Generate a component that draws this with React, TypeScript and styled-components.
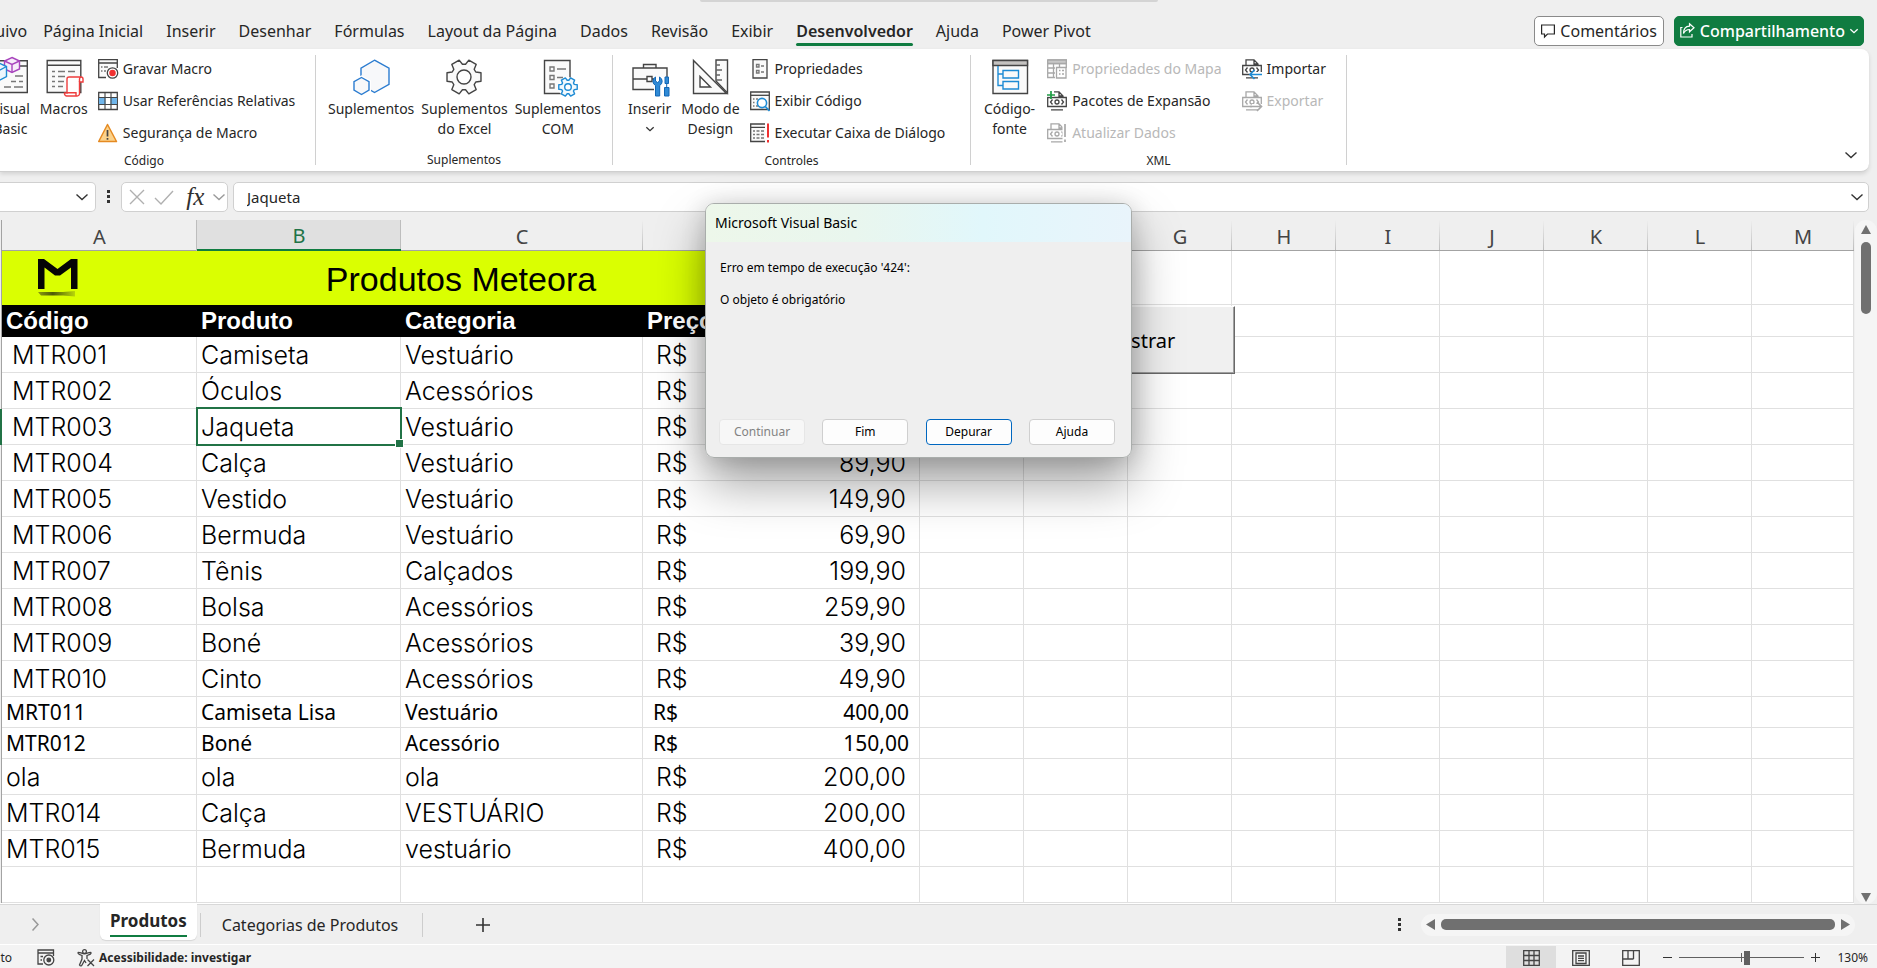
import React from "react";
import styled, { createGlobalStyle, css } from "styled-components";

const ui = '"Noto Sans", "Open Sans", sans-serif';
const GREEN = "#107c41";
const LINE = "#e0e0e0";

const Global = createGlobalStyle`
  * { box-sizing: border-box; }
  body { margin: 0; background: #efefef; font-family: ${ui}; color: #262626; overflow: hidden; }
  button, input { font-family: inherit; color: inherit; }
  svg { display: block; flex: none; overflow: visible; }
`;

const Window = styled.div`
  position: relative;
  display: flex;
  flex-direction: column;
  height: 100vh;
  overflow: hidden;
`;

/* ---------- menu bar ---------- */
const SearchEdge = styled.div`
  position: absolute;
  top: 0;
  left: 700px;
  width: 458px;
  height: 2px;
  background: #d4d4d4;
  border-radius: 0 0 4px 4px;
`;
const MenuBar = styled.header`
  display: flex;
  align-items: center;
  justify-content: space-between;
  flex: none;
  height: 49px;
  padding: 12px 13px 0 0;
`;
const Menu = styled.nav`
  display: flex;
  gap: 23px;
  margin-left: -31px;
`;
const MenuItem = styled.a<{ $active?: boolean }>`
  position: relative;
  font-size: 16px;
  line-height: 24px;
  color: #262626;
  text-decoration: none;
  white-space: nowrap;
  &:first-child { margin-right: -7px; }
  ${(p) =>
    p.$active &&
    css`
      font-weight: 600;
      &::after {
        content: "";
        position: absolute;
        left: 0;
        right: 0;
        bottom: -3px;
        height: 3px;
        border-radius: 2px;
        background: ${GREEN};
      }
    `}
`;
const Actions = styled.div`
  display: flex;
  gap: 10px;
`;
const ActionButton = styled.button<{ $primary?: boolean }>`
  display: flex;
  align-items: center;
  gap: 5px;
  height: 30px;
  padding: 0 ${(p) => (p.$primary ? 5 : 6)}px;
  border: 1px solid ${(p) => (p.$primary ? GREEN : "#8a8a8a")};
  border-radius: 5px;
  background: ${(p) => (p.$primary ? GREEN : "#fff")};
  color: ${(p) => (p.$primary ? "#fff" : "#262626")};
  font-size: 16px;
  font-weight: ${(p) => (p.$primary ? 500 : 400)};
  line-height: 24px;
`;

/* ---------- ribbon ---------- */
const Ribbon = styled.section`
  display: flex;
  flex: none;
  height: 123px;
  margin-right: 8px;
  padding-top: 4px;
  background: #fff;
  border-radius: 0 8px 8px 0;
  border-bottom: 1px solid #cfcfcf;
  box-shadow: 0 2px 4px rgba(0, 0, 0, 0.12);
`;
const Group = styled.div<{ $width: number; $shift?: number }>`
  display: flex;
  flex-direction: column;
  flex: none;
  width: ${(p) => p.$width}px;
  margin-left: ${(p) => p.$shift ?? 0}px;
`;
const GroupRow = styled.div<{ $gap: number; $pad: number }>`
  display: flex;
  height: 96px;
  gap: ${(p) => p.$gap}px;
  padding-left: ${(p) => p.$pad}px;
`;
const GroupLabel = styled.div`
  font-size: 12px;
  line-height: 23px;
  text-align: center;
`;
const Divider = styled.div`
  flex: none;
  width: 1px;
  height: 110px;
  margin-top: 2px;
  background: #d0d0d0;
`;
const Big = styled.button`
  display: flex;
  flex-direction: column;
  align-items: center;
  gap: 4px;
  padding: 6px 3px 0;
  border: 0;
  background: none;
  font-size: 14px;
  line-height: 20px;
  text-align: center;
  white-space: pre-line;
`;
const SmallList = styled.div`
  display: grid;
  grid-template-rows: repeat(3, 32px);
  grid-auto-flow: column;
  column-gap: 20px;
  justify-items: start;
  margin-left: 3px;
`;
const Small = styled.button`
  display: flex;
  align-items: center;
  gap: 5px;
  padding: 0;
  border: 0;
  background: none;
  font-size: 14px;
  line-height: 20px;
  white-space: nowrap;
  &:disabled { color: #b8b8b8; }
`;
const Collapse = styled.button`
  align-self: flex-end;
  margin: 0 12px 13px auto;
  padding: 0;
  border: 0;
  background: none;
`;

/* ---------- formula bar ---------- */
const FormulaBar = styled.div`
  display: flex;
  align-items: center;
  flex: none;
  height: 30px;
  margin: 10px 8px 8px 0;
`;
const Box = styled.div<{ $kind: "name" | "fx" | "text" }>`
  display: flex;
  align-items: center;
  height: 30px;
  border: 1px solid #d0d0d0;
  background: #fff;
  ${(p) =>
    p.$kind === "name"
      ? "width: 96px; border-left: 0; border-radius: 0 5px 5px 0; padding-right: 7px;"
      : p.$kind === "fx"
      ? "width: 107px; border-radius: 5px; justify-content: space-between; padding: 0 2px 0 7px; margin-right: 5px;"
      : "flex: 1; border-radius: 5px; padding: 0 5px 0 13px;"}
`;
const PlainInput = styled.input`
  flex: 1;
  min-width: 0;
  padding: 0;
  border: 0;
  outline: 0;
  background: none;
  font-size: 15px;
  line-height: 22px;
`;
const Dots = styled.div`
  width: 25px;
  display: flex;
  justify-content: center;
`;
const Fx = styled.span`
  padding-left: 4px;
  font: italic 400 25px/24px "Liberation Serif", serif;
  color: #303030;
`;

/* ---------- sheet ---------- */
const Sheet = styled.main`
  position: relative;
  display: flex;
  align-items: stretch;
  flex: 1;
  min-height: 0;
  overflow: hidden;
`;
const GridArea = styled.div`
  position: relative;
  flex: 1;
  min-width: 0;
  background: #fff;
`;
const Grid = styled.table`
  width: 100%;
  table-layout: fixed;
  border-collapse: separate;
  border-spacing: 0;
`;
const ColHead = styled.th<{ $sel?: boolean }>`
  height: 31px;
  padding: 3px 0 0;
  background: linear-gradient(#efefef, #bdbdbd) right / 1px 100% no-repeat, #efefef;
  border-bottom: 1px solid #a3a3a3;
  color: #444;
  font-size: 20px;
  font-weight: 400;
  line-height: 26px;
  ${(p) =>
    p.$sel &&
    css`
      padding-top: 2px;
      background: #e0e0e0;
      box-shadow: -1px 0 0 #bdbdbd, inset -1px 0 0 #bdbdbd;
      border-bottom: 2px solid ${GREEN};
      color: #217346;
    `}
`;
const RowHead = styled.th<{ $sel?: boolean }>`
  padding: 0;
  background: ${(p) => (p.$sel ? "#217346" : "#efefef")};
  border-right: 1px solid ${(p) => (p.$sel ? "#217346" : "#a3a3a3")};
`;
const Row = styled.tr<{ $h: number }>`
  height: ${(p) => p.$h}px;
`;
const Cell = styled.td<{ $compact?: boolean; $indent?: boolean }>`
  position: relative;
  padding: 0 4px 0 ${(p) => (p.$indent ? 10 : 4)}px;
  border-right: 1px solid ${LINE};
  border-bottom: 1px solid ${LINE};
  color: #000;
  white-space: nowrap;
  font: ${(p) =>
    p.$compact ? `400 21px/28px ${ui}` : '300 25px/30px Inter, "Open Sans", sans-serif'};
`;
const Money = styled.div<{ $compact?: boolean }>`
  display: flex;
  justify-content: space-between;
  padding: ${(p) => (p.$compact ? "0 6px 0 6px" : "0 9px 0 9px")};
`;
const TitleCell = styled.td`
  position: relative;
  padding: 2px 0 0;
  background: #daff01;
  color: #000;
  font: 400 34px/40px "Liberation Sans", Arial, sans-serif;
  text-align: center;
`;
const Logo = styled.svg`
  position: absolute;
  left: 33px;
  top: 7px;
`;
const FieldCell = styled.th`
  padding: 0 4px;
  background: #000;
  color: #fff;
  font: 700 24px/28px "Liberation Sans", Arial, sans-serif;
  text-align: left;
`;
const Selection = styled.div`
  position: absolute;
  inset: -2px -2px -2px -1px;
  border: 2px solid #217346;
  z-index: 1;
  &::after {
    content: "";
    position: absolute;
    right: -4px;
    bottom: -4px;
    width: 7px;
    height: 7px;
    background: #217346;
    border: 1px solid #fff;
  }
`;
const SheetButton = styled.button`
  position: absolute;
  left: 1024px;
  top: 86px;
  width: 211px;
  height: 68px;
  border: 1px solid;
  border-color: #fff #696969 #696969 #fff;
  box-shadow: inset -1px -1px 0 #a0a0a0;
  background: #f0f0f0;
  color: #000;
  font-size: 20px;
  z-index: 2;
`;
const VScroll = styled.div`
  display: flex;
  flex-direction: column;
  align-items: center;
  flex: none;
  width: 22px;
  margin-left: 1px;
  padding: 5px 0 2px;
  border-radius: 11px;
  background: #f5f5f5;
`;
const VThumb = styled.div`
  width: 10px;
  height: 72px;
  margin: 7px 0 auto;
  border-radius: 5px;
  background: #707070;
`;

/* ---------- sheet tabs ---------- */
const TabStrip = styled.div`
  display: flex;
  align-items: center;
  flex: none;
  height: 40px;
  padding-right: 22px;
  border-top: 1px solid #d8d8d8;
`;
const Nav = styled.button`
  width: 100px;
  padding: 0 0 0 32px;
  border: 0;
  background: none;
`;
const SheetTab = styled.button<{ $active?: boolean }>`
  position: relative;
  align-self: flex-start;
  height: 36px;
  margin-top: -1px;
  border: 0;
  white-space: nowrap;
  line-height: 24px;
  ${(p) =>
    p.$active
      ? css`
          padding: 0 10px 2px;
          background: #fff;
          border-radius: 0 0 6px 6px;
          box-shadow: 0 1px 1px #d6d6d6;
          font-size: 17px;
          font-weight: 700;
          &::after {
            content: "";
            position: absolute;
            left: 10px;
            right: 10px;
            bottom: 3px;
            height: 2px;
            background: ${GREEN};
          }
        `
      : css`
          padding: 5px 21px 0;
          background: none;
          font-size: 16px;
        `}
`;
const TabRule = styled.div`
  width: 1px;
  height: 24px;
  margin-left: 3px;
  background: #cdcdcd;
`;
const AddTab = styled.button`
  margin-left: 53px;
  padding: 0;
  border: 0;
  background: none;
`;
const Spacer = styled.div`
  flex: 1;
`;
const HScroll = styled.div`
  display: flex;
  align-items: center;
  gap: 6px;
  width: 434px;
  height: 22px;
  margin-left: 20px;
  padding: 0 5px;
  border-radius: 11px;
  background: #f5f5f5;
`;
const HThumb = styled.div`
  flex: 1;
  height: 11px;
  border-radius: 5px;
  background: #707070;
`;

/* ---------- status bar ---------- */
const StatusBar = styled.footer`
  display: flex;
  align-items: center;
  flex: none;
  height: 24px;
  padding: 2px 9px 0 0;
  border-top: 1px solid #fff;
  background: #f3f3f3;
  font-size: 12px;
  line-height: 18px;
  white-space: nowrap;
`;
const Mode = styled.span`
  display: flex;
  justify-content: flex-end;
  width: 12px;
  margin-right: 25px;
`;
const Check = styled.button`
  display: flex;
  align-items: center;
  gap: 4px;
  margin-left: 22px;
  padding: 0;
  border: 0;
  background: none;
  font-size: 12px;
  font-weight: 700;
`;
const ViewButton = styled.button<{ $on?: boolean }>`
  display: flex;
  align-items: center;
  justify-content: center;
  width: 50px;
  height: 24px;
  padding: 0;
  border: 0;
  background: ${(p) => (p.$on ? "#dedede" : "none")};
`;
const ZoomStep = styled.button`
  width: 9px;
  margin: 0 7px;
  padding: 0;
  border: 0;
  background: none;
`;
const ZoomRange = styled.input`
  appearance: none;
  width: 125px;
  height: 16px;
  margin: 0;
  background: linear-gradient(#606060, #606060) center / 100% 1px no-repeat,
    linear-gradient(#606060, #606060) center / 1px 9px no-repeat;
  &::-webkit-slider-thumb {
    appearance: none;
    width: 6px;
    height: 14px;
    background: #606060;
  }
`;
const ZoomLabel = styled.span`
  width: 41px;
  text-align: right;
`;

/* ---------- dialog ---------- */
const DialogShadow = styled.div`
  position: absolute;
  left: 705px;
  top: 203px;
  border-radius: 9px;
  box-shadow: 0 26px 50px rgba(0, 0, 0, 0.36), 0 2px 24px rgba(0, 0, 0, 0.16);
  z-index: 4;
`;
const Dialog = styled.div`
  display: flex;
  flex-direction: column;
  width: 427px;
  height: 255px;
  border: 1px solid #a9adab;
  border-radius: 9px;
  background: #efefef;
  color: #000;
  overflow: hidden;
`;
const DialogTitle = styled.h2`
  margin: 0;
  padding: 0 9px;
  background: linear-gradient(90deg, #edf7ea 0%, #e9f6ee 35%, #e1f7fb 65%, #e9f4fb 100%);
  font-size: 14px;
  font-weight: 400;
  line-height: 38px;
`;
const DialogText = styled.p`
  margin: 0;
  padding: 18px 14px 0;
  font-size: 12px;
  line-height: 16px;
  white-space: pre-line;
`;
const DialogButtons = styled.div`
  display: flex;
  justify-content: space-between;
  margin: auto 16px 12px 13px;
`;
const DialogButton = styled.button<{ $default?: boolean }>`
  width: 86px;
  height: 26px;
  padding: 0;
  border: 1px solid ${(p) => (p.$default ? "#0067c0" : "#cfcfcf")};
  border-radius: 4px;
  background: #fdfdfd;
  font-size: 12px;
  line-height: 18px;
  &:disabled { color: #838383; background: #f7f7f7; border-color: #e6e6e6; }
`;

/* ---------- icons ---------- */
const D = "#444";
const BLUE = "#1e8bd4";

const Chevron = ({ size = 12, color = "#333", dir = "down" }: { size?: number; color?: string; dir?: string }) => (
  <svg width={dir === "down" ? size : size / 2} height={dir === "down" ? size / 2 : size}
    viewBox={dir === "down" ? "0 0 12 6" : "0 0 6 12"} fill="none" stroke={color} strokeWidth={size < 10 ? 2 : 1.4}>
    <path d={dir === "down" ? "M0.5 0.5 6 5.5 11.5 0.5" : "M0.5 0.5 5.5 6 0.5 11.5"} />
  </svg>
);
const MenuArrow = styled.span`
  padding-top: 4px;
`;
const Kebab = () => (
  <svg width="3" height="14" fill="#333"><path d="M0 0h3v3H0zM0 5h3v3H0zM0 10h3v3H0z" /></svg>
);

const gear = (cx: number, cy: number, ro: number, ri: number) => {
  const pts: string[] = [];
  for (let k = 0; k < 6; k++)
    for (const [a, r] of [[-23, ri], [-14, ro], [14, ro], [23, ri]]) {
      const t = ((k * 60 + a) * Math.PI) / 180;
      pts.push(`${(cx + r * Math.cos(t)).toFixed(2)},${(cy + r * Math.sin(t)).toFixed(2)}`);
    }
  return pts.join(" ");
};

const Svg36 = ({ children }: { children: React.ReactNode }) => (
  <svg width="36" height="36" viewBox="0 0 36 36" fill="none" stroke={D} strokeWidth="1.4">{children}</svg>
);
const Svg20 = ({ children, dim }: { children: React.ReactNode; dim?: boolean }) => (
  <svg width="20" height="20" viewBox="0 0 20 20" fill="none" stroke={dim ? "#a8a8a8" : D} strokeWidth="1.3">{children}</svg>
);

const VisualBasicIcon = () => (
  <Svg36>
    <path d="M1 1.7H35.3V33.5H1Z" fill="#fafafa" /><path d="M1 7H35" />
    <path d="M23 17h8M19 22.5h5M27 22.5h4M12 28h7M22 28h9" stroke="#777" />
    <path d="M20 -1.5 27.5 2V10L20 13.5 12.5 10V2Z" fill="#f7ecfa" stroke="#a845bd" />
    <path d="M12.5 2 20 5.5 27.5 2M20 5.5V13.5" stroke="#a845bd" />
    <path d="M6 3.5 14.5 7.5V17.5L6 22 -3 17.5V7.5Z" fill="#eef6fc" stroke={BLUE} />
    <path d="M-3 7.5 6 12 14.5 7.5M6 12V22" stroke={BLUE} />
  </Svg36>
);
const MacrosIcon = () => (
  <Svg36>
    <path d="M1.2 1.5H34.8V33.5H1.2Z" fill="#fafafa" /><path d="M1.2 6.3H34.8" />
    <path d="M6 12.5h3M12 12.5h7M22 12.5h7M6 17.5h3M12 17.5h7M6 22.5h3M12 22.5h6M6 27.5h3M12 27.5h5" stroke="#777" />
    <path d="M22.5 18H35a2 2 0 0 1 2 2V23H33.5V34a2.5 2.5 0 0 1-2.5 3H20.5a2.5 2.5 0 0 1-2-3H21V20a2 2 0 0 1 2-2Z" fill="#fff" stroke="#ee3d3d" />
    <path d="M33.5 23V20a2 2 0 0 1 1.5-2M21 33.8H30V37" stroke="#ee3d3d" />
  </Svg36>
);
const AddinsIcon = () => (
  <Svg36>
    <path d="M21.5 1.2 36 9.2V25.3L21.5 33.5 8 25.5V9.2Z" fill="#f7f8fa" stroke="#2b7cd0" />
    <path d="M8.5 18.5 16 22.7V31.2L8.5 35.5 1 31.2V22.7Z" fill="#f7f8fa" stroke="#fff" strokeWidth="4" />
    <path d="M8.5 18.5 16 22.7V31.2L8.5 35.5 1 31.2V22.7Z" fill="#f7f8fa" stroke="#2b7cd0" />
  </Svg36>
);
const GearIcon = () => (
  <Svg36>
    <polygon points={gear(18, 18, 17.5, 12.8)} fill="#fafafa" strokeLinejoin="round" />
    <circle cx="18" cy="18" r="7" fill="#fff" />
  </Svg36>
);
const ComIcon = () => (
  <Svg36>
    <path d="M4.5 1.5H30V34.5H4.5Z" fill="#fafafa" />
    <path d="M10 8h4v4h-4zM10 16.5h4v4h-4zM10 25h4v4h-4zM17 10h9M17 18.5h6" stroke="#777" />
    <circle cx="28" cy="28" r="10" fill="#fff" stroke="none" />
    <polygon points={gear(28, 28, 9.5, 6.8)} fill="#f2f9fd" stroke={BLUE} strokeLinejoin="round" />
    <circle cx="28" cy="28" r="3.3" fill="#fff" stroke={BLUE} />
  </Svg36>
);
const ToolboxIcon = () => (
  <Svg36>
    <path d="M11.5 9V5.5H24V9M1 9H35V30.5H1ZM1 20H15M20 20H35" fill="#fafafa" />
    <path d="M15 17.5h5v5h-5z" fill="#fff" />
    <path d="M22 18H38V38H22Z" fill="#fff" stroke="none" />
    <path d="M23.500 18V22L25.500 23.500 27.500 22V18A4.800 4.800 0 0 1 27.700 26.500V37H23.500V26.500A4.800 4.800 0 0 1 23.500 18Z" fill="#2f8ad6" stroke="#1267b5" strokeWidth="1" />
    <path d="M33 18H36.500V24.500H33ZM32.500 28.500H37V37H32.500ZM34.700 24.500V28.500" fill="#2f8ad6" stroke="#1267b5" strokeWidth="1" />
  </Svg36>
);
const DesignIcon = () => (
  <Svg36>
    <path d="M24 1H35.5V34L24 22Z" fill="#fafafa" />
    <path d="M24 6h4M24 11h6M24 16h4M24 21h6" stroke="#666" />
    <path d="M1.5 1.5V34.5H34.5Z" fill="#fafafa" />
    <path d="M8 17.5V28H18.5Z" fill="#fff" />
  </Svg36>
);
const SourceIcon = () => (
  <Svg36>
    <path d="M1 1.5H35.5V34.5H1Z" fill="#fafafa" />
    <path d="M1 1.5H35.5V6.5H1Z" fill="#c4c2c0" />
    <path d="M6 7V26.5H11M6 15H11M11 11.5H26.5V19H11ZM11 22.5H26.5V30H11Z" stroke={BLUE} />
  </Svg36>
);
const RecordIcon = () => (
  <Svg20>
    <path d="M19.3 9V.7H.7V18.5H8M.7 4H19.3" fill="#fafafa" />
    <path d="M3 8h1.5M6 8h4M3 12h1.5M6 12h2" stroke="#777" />
    <circle cx="14.5" cy="14" r="5.2" fill="#fff" /><circle cx="14.5" cy="14" r="2.6" fill="#f03030" stroke="#f03030" />
  </Svg20>
);
const RelativeIcon = () => (
  <Svg20>
    <path d="M.7 1.5H19.3V18.5H.7Z" fill="#fff" />
    <path d="M1 6.5H19V13.5H1Z" fill="#6fb5ea" stroke="none" />
    <path d="M7.5 7H12.5V13H7.5Z" fill="#fff" stroke="none" />
    <path d="M.7 6.5H19.3M.7 13.5H19.3M7 1.5V18.5M13 1.5V18.5" strokeWidth="1.1" />
  </Svg20>
);
const WarningIcon = () => (
  <Svg20>
    <path d="M9.5 1.5 18.5 18.5H.7Z" fill="#fbd28b" stroke="#e58a22" strokeWidth="1.5" strokeLinejoin="round" />
    <path d="M9.5 7V13.5M9.5 15V16.8" strokeWidth="1.7" />
  </Svg20>
);
const PropsIcon = () => (
  <Svg20>
    <path d="M3 .7H17V19H3Z" fill="#fafafa" />
    <path d="M6.5 5.5h2.5v2.5H6.5zM6.5 11.5h2.5v2.5H6.5zM11 7h3M11 13h3" stroke="#777" />
  </Svg20>
);
const ViewCodeIcon = () => (
  <Svg20>
    <path d="M.7 1H19.3V18.5H.7Z" fill="#fafafa" /><path d="M.7 4.3H19.3" />
    <path d="M3 8h1.5M6 8h2M3 11.5h1.5M3 15h1.5M6 15h2" stroke="#777" />
    <circle cx="12" cy="12" r="4.6" fill="#fff" stroke={BLUE} strokeWidth="1.6" /><path d="M15.3 15.5 19.5 20" stroke={BLUE} strokeWidth="1.8" />
  </Svg20>
);
const RunDialogIcon = () => (
  <Svg20>
    <path d="M15 1H.7V18.5H15M.7 4.3H15" fill="#fafafa" />
    <path d="M3 8h2M6.5 8h3M11 8h3M3 11.5h2M6.5 11.5h3M11 11.5h3M3 15h2M6.5 15h3M11 15h3" stroke="#777" />
    <path d="M18 .5V14.5M18 17V19.5" stroke="#f03030" strokeWidth="2" />
  </Svg20>
);
const MapPropsIcon = () => (
  <Svg20 dim>
    <path d="M.7 1H19.3V9M.7 1V18.5H8M.7 4.5H19.3M.7 9H8M.7 14H8M6.5 4.5V18.5M12.5 4.5V8" />
    <path d="M.7 1H19.3V4.5H.7Z" fill="#c8c8c8" />
    <path d="M9.5 8.5H19V19H9.5ZM12 11.5h1.5M15 11.5h2M12 15h1.5M15 15h2" />
  </Svg20>
);
const XmlBase = () => (
  <>
    <path d="M4 6V.8H12L16 5V6M12 1V5H16M.7 6.5H19.3V15.5H.7ZM4 18.8H16" />
    <path d="M5.5 8.5 3.5 11 5.5 13.5M14.5 8.5 16.5 11 14.5 13.5" />
    <circle cx="10" cy="11" r="2" />
  </>
);
const PacksIcon = () => (
  <Svg20><XmlBase /><path d="M-1 -1H7V5.5H-1Z" fill="#fff" stroke="none" /><path d="M4 0V8M0 4H8" stroke="#1f9d45" strokeWidth="1.7" /></Svg20>
);
const RefreshIcon = () => (
  <Svg20 dim><XmlBase /><path d="M15.5 3H21V20H15.5Z" fill="#fff" stroke="none" /><path d="M18 1V14M18 16.5V19" strokeWidth="1.7" /></Svg20>
);
const ImportIcon = () => (
  <Svg20><XmlBase /><path d="M10 13H21V18H10Z" fill="#fff" stroke="none" /><path d="M20 15.5H8M12.5 11 8 15.5 12.5 20" stroke={BLUE} strokeWidth="1.6" /></Svg20>
);
const ExportIcon = () => (
  <Svg20 dim><XmlBase /><path d="M10 13H21V18H10Z" fill="#fff" stroke="none" /><path d="M8 15.5H19M15 11 19.5 15.5 15 20" strokeWidth="1.6" /></Svg20>
);
const CommentIcon = () => (
  <svg width="14" height="14" viewBox="0 0 14 14" fill="none" stroke="#262626" strokeWidth="1.2">
    <path d="M.6 1H13.4V10H6.5L3.5 13V10H.6Z" />
  </svg>
);
const ShareIcon = () => (
  <svg width="15" height="15" viewBox="0 0 15 15" fill="none" stroke="#fff" strokeWidth="1.2">
    <path d="M2.5 4.5H.8V14H12V11M9.5 .8 14 4.8 9.5 8.8V6.5C6.5 6.5 5 7.5 3.5 10.5 3.5 6 5.5 3.3 9.5 3.1Z" />
  </svg>
);

/* ---------- data ---------- */
type Item = { code: string; name: string; cat: string; price: string; compact?: boolean; indent?: boolean };
const item = (code: string, name: string, cat: string, price: string, compact = false): Item => ({
  code, name, cat, price, compact, indent: /^MTR0(0|10)/.test(code),
});
const items: Item[] = [
  item("MTR001", "Camiseta", "Vestuário", "79,90"),
  item("MTR002", "Óculos", "Acessórios", "99,90"),
  item("MTR003", "Jaqueta", "Vestuário", "199,90"),
  item("MTR004", "Calça", "Vestuário", "89,90"),
  item("MTR005", "Vestido", "Vestuário", "149,90"),
  item("MTR006", "Bermuda", "Vestuário", "69,90"),
  item("MTR007", "Tênis", "Calçados", "199,90"),
  item("MTR008", "Bolsa", "Acessórios", "259,90"),
  item("MTR009", "Boné", "Acessórios", "39,90"),
  item("MTR010", "Cinto", "Acessórios", "49,90"),
  item("MRT011", "Camiseta Lisa", "Vestuário", "400,00", true),
  item("MTR012", "Boné", "Acessório", "150,00", true),
  item("ola", "ola", "ola", "200,00"),
  item("MTR014", "Calça", "VESTUÁRIO", "200,00"),
  item("MTR015", "Bermuda", "vestuário", "400,00"),
];
const columns = ["A", "B", "C", "D", "E", "F", "G", "H", "I", "J", "K", "L", "M"];
const widths = [195, 204, 242, 277, 104, 104, 104, 104, 104, 104, 104, 104];
const menus = ["Arquivo", "Página Inicial", "Inserir", "Desenhar", "Fórmulas", "Layout da Página", "Dados", "Revisão", "Exibir", "Desenvolvedor", "Ajuda", "Power Pivot"];
const SELECTED_CODE = "MTR003";

const Blanks = ({ n }: { n: number }) => <>{Array.from({ length: n }, (_, i) => <Cell key={i} />)}</>;

export default function App() {
  return (
    <Window>
      <Global />
      <SearchEdge />
      <MenuBar>
        <Menu>
          {menus.map((m) => (
            <MenuItem key={m} href="#" $active={m === "Desenvolvedor"}>{m}</MenuItem>
          ))}
        </Menu>
        <Actions>
          <ActionButton><CommentIcon />Comentários</ActionButton>
          <ActionButton $primary><ShareIcon />Compartilhamento<Chevron size={8} color="#fff" /></ActionButton>
        </Actions>
      </MenuBar>

      <Ribbon>
        <Group $width={342} $shift={-27}>
          <GroupRow $gap={4} $pad={15}>
            <Big><VisualBasicIcon />{"Visual\nBasic"}</Big>
            <Big><MacrosIcon />Macros</Big>
            <SmallList>
              <Small><RecordIcon />Gravar Macro</Small>
              <Small><RelativeIcon />Usar Referências Relativas</Small>
              <Small><WarningIcon />Segurança de Macro</Small>
            </SmallList>
          </GroupRow>
          <GroupLabel>Código</GroupLabel>
        </Group>
        <Divider />
        <Group $width={296}>
          <GroupRow $gap={1} $pad={9}>
            <Big><AddinsIcon />Suplementos</Big>
            <Big><GearIcon />{"Suplementos\ndo Excel"}</Big>
            <Big><ComIcon />{"Suplementos\nCOM"}</Big>
          </GroupRow>
          <GroupLabel>Suplementos</GroupLabel>
        </Group>
        <Divider />
        <Group $width={357}>
          <GroupRow $gap={4} $pad={12}>
            <Big><ToolboxIcon />Inserir<MenuArrow><Chevron size={8} /></MenuArrow></Big>
            <Big><DesignIcon />{"Modo de\nDesign"}</Big>
            <SmallList>
              <Small><PropsIcon />Propriedades</Small>
              <Small><ViewCodeIcon />Exibir Código</Small>
              <Small><RunDialogIcon />Executar Caixa de Diálogo</Small>
            </SmallList>
          </GroupRow>
          <GroupLabel>Controles</GroupLabel>
        </Group>
        <Divider />
        <Group $width={375}>
          <GroupRow $gap={6} $pad={10}>
            <Big><SourceIcon />{"Código-\nfonte"}</Big>
            <SmallList>
              <Small disabled><MapPropsIcon />Propriedades do Mapa</Small>
              <Small><PacksIcon />Pacotes de Expansão</Small>
              <Small disabled><RefreshIcon />Atualizar Dados</Small>
              <Small><ImportIcon />Importar</Small>
              <Small disabled><ExportIcon />Exportar</Small>
            </SmallList>
          </GroupRow>
          <GroupLabel>XML</GroupLabel>
        </Group>
        <Divider />
        <Collapse aria-label="Recolher faixa"><Chevron /></Collapse>
      </Ribbon>

      <FormulaBar>
        <Box $kind="name"><PlainInput aria-label="Caixa de nome" /><Chevron /></Box>
        <Dots><Kebab /></Dots>
        <Box $kind="fx">
          <svg width="16" height="16" fill="none" stroke="#b0b0b0" strokeWidth="1.4"><path d="M1 1 15 15M15 1 1 15" /></svg>
          <svg width="20" height="15" fill="none" stroke="#b0b0b0" strokeWidth="1.4"><path d="M1 8 7 14 19 1" /></svg>
          <Fx>fx</Fx>
          <Chevron color="#9a9a9a" />
        </Box>
        <Box $kind="text"><PlainInput aria-label="Barra de fórmulas" defaultValue="Jaqueta" /><Chevron /></Box>
      </FormulaBar>

      <Sheet>
        <GridArea>
          <Grid>
            <colgroup>
              <col width={2} />
              {widths.map((w, i) => <col key={i} width={w} />)}
              <col />
            </colgroup>
            <thead>
              <tr>
                <RowHead />
                {columns.map((c) => <ColHead key={c} $sel={c === "B"}>{c}</ColHead>)}
              </tr>
            </thead>
            <tbody>
              <Row $h={54}>
                <RowHead />
                <TitleCell colSpan={4}>
                  <Logo width="44" height="42" viewBox="0 0 44 42">
                    <defs>
                      <linearGradient id="smear"><stop offset="0" stopColor="#8c9a10" /><stop offset=".4" stopColor="#4d5a08" /><stop offset="1" stopColor="#b8d60a" /></linearGradient>
                    </defs>
                    <path d="M3 31V1H9L22.5 11 36 1H42.5V31H36V9.5L25 17.5H20L9.5 9.5V31Z" fill="#050505" />
                    <path d="M3 34H28L40 33V38.5L28 37.5H6Z" fill="url(#smear)" />
                  </Logo>
                  Produtos Meteora
                </TitleCell>
                <Blanks n={9} />
              </Row>
              <Row $h={32}>
                <RowHead />
                {["Código", "Produto", "Categoria", "Preço"].map((h) => <FieldCell key={h}>{h}</FieldCell>)}
                <Blanks n={9} />
              </Row>
              {items.map((r) => (
                <Row key={r.code} $h={r.compact ? 31 : 36}>
                  <RowHead $sel={r.code === SELECTED_CODE} />
                  <Cell $compact={r.compact} $indent={r.indent}>{r.code}</Cell>
                  <Cell $compact={r.compact}>{r.name}{r.code === SELECTED_CODE && <Selection />}</Cell>
                  <Cell $compact={r.compact}>{r.cat}</Cell>
                  <Cell $compact={r.compact}>
                    <Money $compact={r.compact}><span>R$</span><span>{r.price}</span></Money>
                  </Cell>
                  <Blanks n={9} />
                </Row>
              ))}
              <Row $h={36}><RowHead /><Blanks n={13} /></Row>
            </tbody>
          </Grid>
          <SheetButton>Cadastrar</SheetButton>
        </GridArea>
        <VScroll>
          <svg width="10" height="10" fill="#707070"><path d="M5 0 10 9H0Z" /></svg>
          <VThumb />
          <svg width="10" height="10" fill="#707070"><path d="M5 10 10 1H0Z" /></svg>
        </VScroll>
      </Sheet>

      <TabStrip>
        <Nav aria-label="Próxima planilha"><Chevron dir="right" size={13} color="#999" /></Nav>
        <SheetTab $active>Produtos</SheetTab>
        <TabRule />
        <SheetTab>Categorias de Produtos</SheetTab>
        <TabRule />
        <AddTab aria-label="Nova planilha">
          <svg width="14" height="14" fill="none" stroke="#333" strokeWidth="1.6"><path d="M7 0V14M0 7H14" /></svg>
        </AddTab>
        <Spacer />
        <Kebab />
        <HScroll>
          <svg width="9" height="11" fill="#707070"><path d="M0 5.5 9 0V11Z" /></svg>
          <HThumb />
          <svg width="9" height="11" fill="#707070"><path d="M9 5.5 0 0V11Z" /></svg>
        </HScroll>
      </TabStrip>

      <StatusBar>
        <Mode>Pronto</Mode>
        <svg width="18" height="17" viewBox="0 0 18 17" fill="none" stroke={D} strokeWidth="1.3">
          <path d="M16.5 7V1H1V15H6M1 4H16.5M3.5 7.5H6M3.5 11H5" /><circle cx="11.8" cy="11" r="5" /><circle cx="11.8" cy="11" r="1.8" fill={D} />
        </svg>
        <Check>
          <svg width="18" height="18" viewBox="0 0 18 18" fill="none" stroke={D} strokeWidth="1.3">
            <circle cx="7.5" cy="2.5" r="1.9" />
            <path d="M1 3.5C.5 5 2 5.5 5 6.5V10L2.5 16C3.5 17.5 4.5 17 5 16L7.5 11.5 9 14M14 3.5C14.5 5 13 5.5 10 6.5V10M1 3.5C2 2.5 5 4.8 7.5 4.8S13 2.5 14 3.5M10.5 10.5 17 17M17 10.5 10.5 17" />
          </svg>
          Acessibilidade: investigar
        </Check>
        <Spacer />
        <ViewButton $on aria-label="Normal">
          <svg width="17" height="16" fill="none" stroke={D} strokeWidth="1.3"><path d="M.7.7H16.3V15.3H.7ZM.7 5.5H16.3M.7 10.5H16.3M6 .7V15.3M11 .7V15.3" /></svg>
        </ViewButton>
        <ViewButton aria-label="Layout da Página">
          <svg width="18" height="16" fill="none" stroke={D} strokeWidth="1.3"><path d="M.7.7H17.3V15.3H.7ZM4 3H14V13.5H4ZM6 6H12M6 8.3H12M6 10.6H12" /></svg>
        </ViewButton>
        <ViewButton aria-label="Quebra de Página">
          <svg width="18" height="16" fill="none" stroke={D} strokeWidth="1.3"><path d="M.7.7H17.3V15.3H.7ZM6 .7V9M11.5 .7V9M.7 9H11.5" /></svg>
        </ViewButton>
        <ZoomStep aria-label="Reduzir"><svg width="9" height="9" stroke="#333"><path d="M0 4.5H9" /></svg></ZoomStep>
        <ZoomRange type="range" aria-label="Zoom" min={0} max={100} defaultValue={55} />
        <ZoomStep aria-label="Ampliar"><svg width="9" height="9" stroke="#333"><path d="M0 4.5H9M4.5 0V9" /></svg></ZoomStep>
        <ZoomLabel>130%</ZoomLabel>
      </StatusBar>

      <DialogShadow>
        <Dialog role="dialog" aria-labelledby="dialog-title">
          <DialogTitle id="dialog-title">Microsoft Visual Basic</DialogTitle>
          <DialogText>{"Erro em tempo de execução '424':\n\nO objeto é obrigatório"}</DialogText>
          <DialogButtons>
            <DialogButton disabled>Continuar</DialogButton>
            <DialogButton>Fim</DialogButton>
            <DialogButton $default>Depurar</DialogButton>
            <DialogButton>Ajuda</DialogButton>
          </DialogButtons>
        </Dialog>
      </DialogShadow>
    </Window>
  );
}
